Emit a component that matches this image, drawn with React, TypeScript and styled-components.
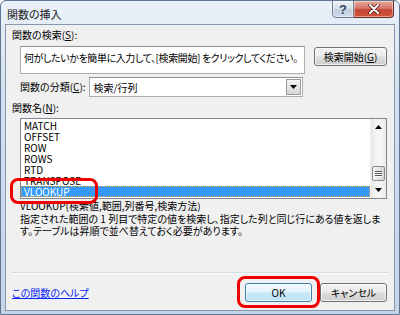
import React from "react";
import styled, { createGlobalStyle } from "styled-components";

const GlobalStyle = createGlobalStyle`
  html, body {
    margin: 0;
    padding: 0;
    background: #ffffff;
  }
  body {
    font-family: "Noto Sans CJK JP", "Noto Sans", sans-serif;
    font-size: 10px;
    font-feature-settings: "palt";
    color: #000;
  }
`;

const Window = styled.div`
  position: relative;
  box-sizing: border-box;
  width: 400px;
  height: 315px;
  border: 1px solid #5f7590;
  border-radius: 6px 6px 0 0;
  background: linear-gradient(180deg, #eaf1f9 0%, #d3e0ef 30%, #c4d5e9 100%);
  display: flex;
  flex-direction: column;
  overflow: hidden;
`;

const TitleBar = styled.div`
  display: flex;
  align-items: flex-start;
  height: 23px;
  flex-shrink: 0;
  padding-left: 6px;
`;

const Title = styled.div`
  margin-top: 6px;
  font-size: 11px;
  line-height: 14px;
  color: #1a1a1a;
`;

const Caption = styled.div`
  display: flex;
  margin-left: auto;
  margin-right: 5px;
  margin-top: -1px;
`;

const CaptionButton = styled.div<{ $close?: boolean }>`
  box-sizing: border-box;
  width: ${(p) => (p.$close ? 40 : 22)}px;
  height: 18px;
  display: flex;
  align-items: center;
  justify-content: center;
  border: 1px solid ${(p) => (p.$close ? "#6d2a22" : "#6c7c90")};
  border-left-width: ${(p) => (p.$close ? 0 : 1)}px;
  border-radius: ${(p) => (p.$close ? "0 0 4px 0" : "0 0 0 4px")};
  background: ${(p) =>
    p.$close
      ? "linear-gradient(180deg, #e9a99c 0%, #d5766a 45%, #c34632 55%, #d2543c 100%)"
      : "linear-gradient(180deg, #eef3f9 0%, #d8e2ee 45%, #c2cfdf 55%, #d0dceb 100%)"};
  box-shadow: inset 0 0 0 1px rgba(255, 255, 255, 0.45);
  color: #34465c;
  font-family: "Liberation Sans", sans-serif;
  font-size: 13px;
  font-weight: bold;
`;

const Client = styled.div`
  flex: 1;
  margin: 0 4px 3px 4px;
  border: 1px solid #8797ad;
  background: #f0f0f0;
  display: flex;
  flex-direction: column;
`;

const Label = styled.div<{ $indent?: number; $top?: number }>`
  margin-left: ${(p) => p.$indent ?? 6}px;
  margin-top: ${(p) => p.$top ?? 0}px;
  line-height: 12px;
  white-space: nowrap;
`;

const Key = styled.span`
  text-decoration: underline;
`;

const SearchRow = styled.div`
  display: flex;
  align-items: flex-start;
  margin: 5px 0 0 14px;
  gap: 9px;
`;

const TextBox = styled.div`
  box-sizing: border-box;
  width: 285px;
  height: 28px;
  background: #fff;
  border: 1px solid #abadb3;
  border-top-color: #8e9095;
  padding: 5px 0 0 3px;
  line-height: 12px;
  letter-spacing: -0.4px;
  white-space: nowrap;
`;

const Button = styled.div<{ $default?: boolean; $w: number; $top?: number }>`
  box-sizing: border-box;
  width: ${(p) => p.$w}px;
  height: 19px;
  margin-top: ${(p) => p.$top ?? 0}px;
  border: 1px solid ${(p) => (p.$default ? "#3c7fb1" : "#707070")};
  border-radius: 3px;
  background: ${(p) =>
    p.$default
      ? "linear-gradient(180deg, #f1f9fe 0%, #e3f3fc 48%, #c9e8fa 52%, #bde2f8 100%)"
      : "linear-gradient(180deg, #f2f2f2 0%, #ebebeb 48%, #dddddd 52%, #cfcfcf 100%)"};
  box-shadow: inset 0 0 0 1px rgba(255, 255, 255, 0.7);
  display: flex;
  align-items: center;
  justify-content: center;
  line-height: 12px;
  white-space: nowrap;
`;

const CategoryRow = styled.div`
  display: flex;
  align-items: center;
  margin: 3px 0 0 14px;
  gap: 3px;
`;

const Select = styled.div`
  box-sizing: border-box;
  width: 214px;
  height: 20px;
  background: #fff;
  border: 1px solid #abadb3;
  border-top-color: #8e9095;
  display: flex;
  align-items: center;
  padding-left: 4px;
`;

const DropButton = styled.div`
  box-sizing: border-box;
  margin-left: auto;
  margin-right: 1px;
  width: 15px;
  height: 16px;
  border: 1px solid #9a9a9a;
  background: linear-gradient(180deg, #f4f4f4 0%, #e4e4e4 50%, #d6d6d6 100%);
  display: flex;
  align-items: center;
  justify-content: center;
`;

const ListBox = styled.div`
  box-sizing: border-box;
  margin: 4px 0 0 14px;
  width: 367px;
  height: 81px;
  background: #fff;
  border: 1px solid #828790;
  display: flex;
`;

const Items = styled.div`
  flex: 1;
  padding-top: 1px;
`;

const Item = styled.div<{ $selected?: boolean }>`
  box-sizing: border-box;
  height: 11px;
  line-height: 11px;
  padding-left: 3px;
  font-family: "Liberation Sans Narrow", "Noto Sans CJK JP", sans-serif;
  font-size: 10px;
  white-space: nowrap;
  color: ${(p) => (p.$selected ? "#fff" : "#000")};
  background: ${(p) => (p.$selected ? "#3399ff" : "transparent")};
  outline: ${(p) => (p.$selected ? "1px dotted #f0a040" : "none")};
  outline-offset: -1px;
`;

const ScrollBar = styled.div`
  width: 15px;
  display: flex;
  flex-direction: column;
  background: linear-gradient(90deg, #e6e6e6 0%, #f4f4f4 30%, #f4f4f4 70%, #e8e8e8 100%);
  border-left: 1px solid #f0f0f0;
`;

const ScrollArrow = styled.div`
  height: 16px;
  display: flex;
  align-items: center;
  justify-content: center;
`;

const Track = styled.div`
  flex: 1;
  display: flex;
  flex-direction: column;
  justify-content: flex-end;
  align-items: center;
`;

const Thumb = styled.div`
  box-sizing: border-box;
  width: 13px;
  height: 15px;
  margin-bottom: 1px;
  border: 1px solid #8a8a8a;
  border-radius: 2px;
  background: linear-gradient(90deg, #f6f6f6 0%, #e4e4e4 55%, #d4d4d4 100%);
  display: flex;
  flex-direction: column;
  align-items: center;
  justify-content: center;
  gap: 1px;
`;

const Grip = styled.div`
  width: 7px;
  height: 1px;
  background: #555;
  box-shadow: 0 1px 0 #fff;
`;

const Description = styled.div`
  margin: 1px 0 0 14px;
  line-height: 12.5px;
  white-space: nowrap;
`;

const Spacer = styled.div`
  flex: 1;
`;

const Separator = styled.div`
  margin: 0 5px 0 6px;
  height: 1px;
  background: #d3dde6;
  box-shadow: 0 1px 0 #fbfbfb;
`;

const Footer = styled.div`
  display: flex;
  align-items: center;
  padding: 10px 7px 8px 6px;
  gap: 8px;
`;

const HelpLink = styled.a`
  color: #0b24fb;
  text-decoration: underline;
  line-height: 12px;
  margin-right: auto;
  cursor: pointer;
`;

const Annotation = styled.div<{ $x: number; $y: number; $w: number; $h: number }>`
  position: absolute;
  left: ${(p) => p.$x}px;
  top: ${(p) => p.$y}px;
  width: ${(p) => p.$w}px;
  height: ${(p) => p.$h}px;
  box-sizing: border-box;
  border: 3px solid #ee0000;
  border-radius: 8px;
  pointer-events: none;
`;

const Triangle = ({ up }: { up?: boolean }) => (
  <svg width="7" height="4" viewBox="0 0 7 4">
    <path d={up ? "M0 4 L3.5 0 L7 4 Z" : "M0 0 L7 0 L3.5 4 Z"} fill="#000" />
  </svg>
);

const CloseGlyph = () => (
  <svg width="12" height="10" viewBox="0 0 12 10">
    <path
      d="M2 1 L10 9 M10 1 L2 9"
      stroke="#5a1a12"
      strokeWidth="3.6"
      strokeLinecap="round"
    />
    <path
      d="M2 1 L10 9 M10 1 L2 9"
      stroke="#ffffff"
      strokeWidth="2"
      strokeLinecap="round"
    />
  </svg>
);

const functions = ["MATCH", "OFFSET", "ROW", "ROWS", "RTD", "TRANSPOSE", "VLOOKUP"];

export default function App() {
  return (
    <>
      <GlobalStyle />
      <Window>
        <TitleBar>
          <Title>関数の挿入</Title>
          <Caption>
            <CaptionButton>?</CaptionButton>
            <CaptionButton $close>
              <CloseGlyph />
            </CaptionButton>
          </Caption>
        </TitleBar>
        <Client>
          <Label $top={4}>
            関数の検索(<Key>S</Key>):
          </Label>
          <SearchRow>
            <TextBox>何がしたいかを簡単に入力して、[検索開始] をクリックしてください。</TextBox>
            <Button $w={73} $top={1}>
              検索開始(<Key>G</Key>)
            </Button>
          </SearchRow>
          <CategoryRow>
            <Label $indent={0}>
              関数の分類(<Key>C</Key>):
            </Label>
            <Select>
              検索/行列
              <DropButton>
                <Triangle />
              </DropButton>
            </Select>
          </CategoryRow>
          <Label $top={5}>
            関数名(<Key>N</Key>):
          </Label>
          <ListBox>
            <Items>
              {functions.map((f) => (
                <Item key={f} $selected={f === "VLOOKUP"}>
                  {f}
                </Item>
              ))}
            </Items>
            <ScrollBar>
              <ScrollArrow>
                <Triangle up />
              </ScrollArrow>
              <Track>
                <Thumb>
                  <Grip />
                  <Grip />
                  <Grip />
                </Thumb>
              </Track>
              <ScrollArrow>
                <Triangle />
              </ScrollArrow>
            </ScrollBar>
          </ListBox>
          <Description>
            VLOOKUP(検索値,範囲,列番号,検索方法)
            <br />
            指定された範囲の 1 列目で特定の値を検索し、指定した列と同じ行にある値を返しま
            <br />
            す。テーブルは昇順で並べ替えておく必要があります。
          </Description>
          <Spacer />
          <Separator />
          <Footer>
            <HelpLink>この関数のヘルプ</HelpLink>
            <Button $default $w={67}>
              OK
            </Button>
            <Button $w={67}>キャンセル</Button>
          </Footer>
        </Client>
        <Annotation $x={9} $y={177} $w={88} $h={26} />
        <Annotation $x={236} $y={275} $w={83} $h={32} />
      </Window>
    </>
  );
}
